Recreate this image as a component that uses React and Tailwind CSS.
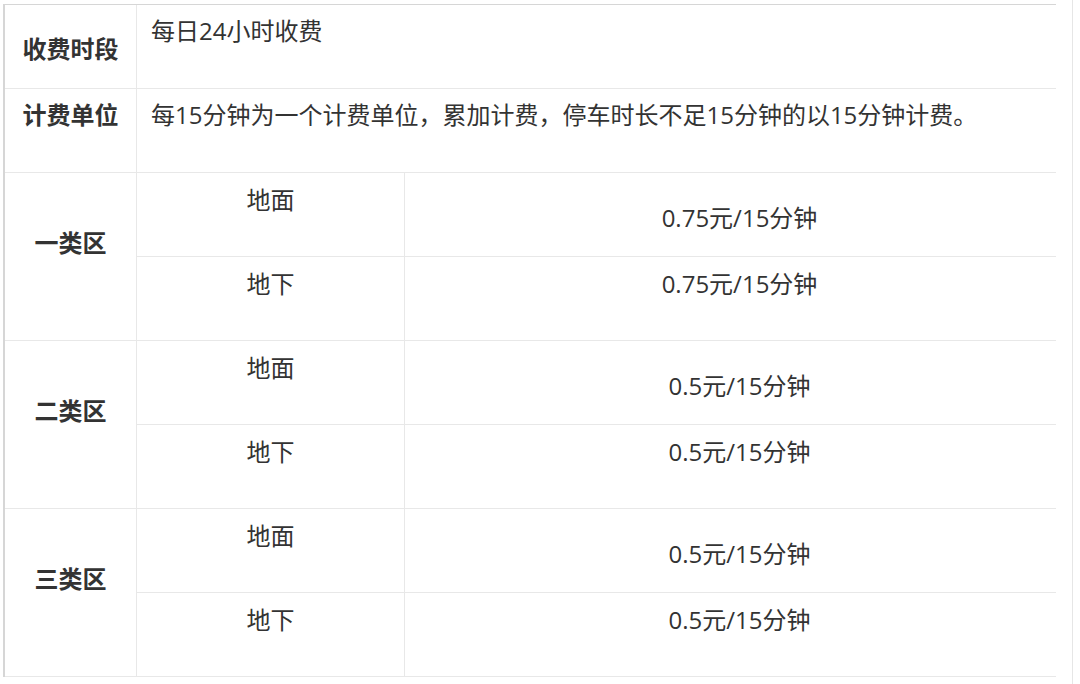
const zones = [
  { name: "一类区", ground: "0.75元/15分钟", under: "0.75元/15分钟" },
  { name: "二类区", ground: "0.5元/15分钟", under: "0.5元/15分钟" },
  { name: "三类区", ground: "0.5元/15分钟", under: "0.5元/15分钟" },
];

function ZoneBlock({ zone }) {
  return (
    <div className="flex border-b border-[#e8e8e8]">
      <div className="w-[132px] shrink-0 border-r border-[#e8e8e8] pt-[54px] text-center font-bold">
        {zone.name}
      </div>
      <div className="flex flex-1 flex-col">
        <div className="flex h-[84px] border-b border-[#e8e8e8]">
          <div className="w-[268px] shrink-0 border-r border-[#e8e8e8] pt-[11px] text-center">地面</div>
          <div className="flex-1 pl-[18px] pt-[29px] text-center">{zone.ground}</div>
        </div>
        <div className="flex h-[83px]">
          <div className="w-[268px] shrink-0 border-r border-[#e8e8e8] pt-[11px] text-center">地下</div>
          <div className="flex-1 pl-[18px] pt-[11px] text-center">{zone.under}</div>
        </div>
      </div>
    </div>
  );
}

export default function App() {
  return (
    <div
      className="h-[684px] w-[1073px] border-r border-[#e6e6e6] bg-white pl-[3px] pt-1 text-[24px] leading-[32px] text-[#333]"
      style={{ fontFamily: '"Open Sans", "Noto Sans CJK SC", sans-serif' }}
    >
      <div className="w-[1053px] border-l-2 border-t border-[#d6d6d6]">
        <div className="flex h-[84px] border-b border-[#e8e8e8]">
          <div className="w-[132px] shrink-0 border-r border-[#e8e8e8] pt-[28px] text-center font-bold">收费时段</div>
          <div className="flex-1 pl-[14px] pt-[10px]">每日24小时收费</div>
        </div>
        <div className="flex h-[84px] border-b border-[#e8e8e8]">
          <div className="w-[132px] shrink-0 border-r border-[#e8e8e8] pt-[10px] text-center font-bold">计费单位</div>
          <div className="flex-1 whitespace-nowrap pl-[14px] pt-[10px]">
            每15分钟为一个计费单位，累加计费，停车时长不足15分钟的以15分钟计费。
          </div>
        </div>
        {zones.map((z) => (
          <ZoneBlock key={z.name} zone={z} />
        ))}
      </div>
    </div>
  );
}
